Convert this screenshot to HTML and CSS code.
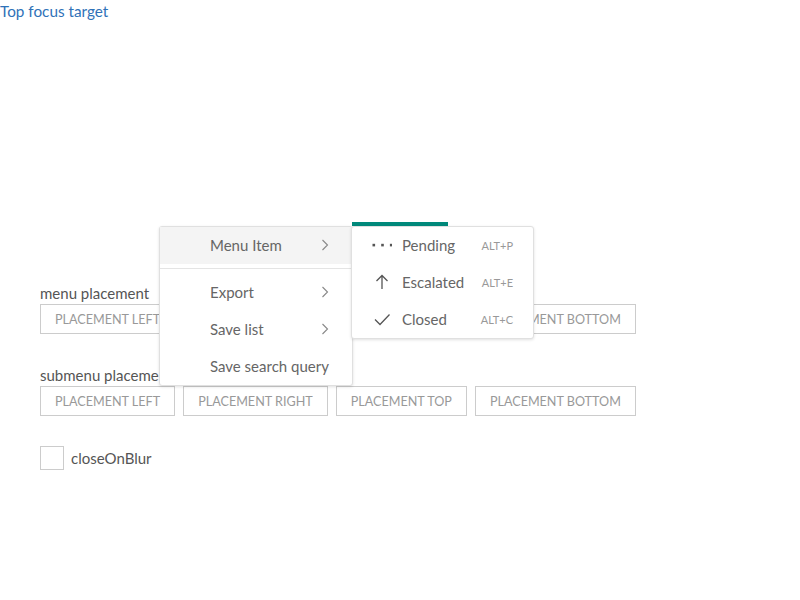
FILE: index.html
```html
<!DOCTYPE html>
<html>
<head>
<meta charset="utf-8">
<link rel="stylesheet" href="styles.css">
</head>
<body>
<a class="top-link" href="#">Top focus target</a>
<div class="stage"></div>
<div class="section">
  <div class="label">menu placement</div>
  <div class="btn-row">
    <button class="btn">Placement left</button>
    <button class="btn">Placement right</button>
    <button class="btn">Placement top</button>
    <button class="btn">Placement bottom</button>
  </div>
</div>
<div class="section">
  <div class="label">submenu placement</div>
  <div class="btn-row">
    <button class="btn">Placement left</button>
    <button class="btn">Placement right</button>
    <button class="btn">Placement top</button>
    <button class="btn">Placement bottom</button>
  </div>
</div>
<label class="check">
  <span class="box"></span>
  <span class="check-text">closeOnBlur</span>
</label>

<div class="trigger-bar"></div>

<div class="menu">
  <div class="item active">
    <span class="item-text">Menu Item</span>
    <svg class="chev" width="8" height="12" viewBox="0 0 8 12"><path d="M1.5 1 L6.5 6 L1.5 11" fill="none" stroke="#888" stroke-width="1.1"/></svg>
  </div>
  <div class="divider"></div>
  <div class="item">
    <span class="item-text">Export</span>
    <svg class="chev" width="8" height="12" viewBox="0 0 8 12"><path d="M1.5 1 L6.5 6 L1.5 11" fill="none" stroke="#888" stroke-width="1.1"/></svg>
  </div>
  <div class="item">
    <span class="item-text">Save list</span>
    <svg class="chev" width="8" height="12" viewBox="0 0 8 12"><path d="M1.5 1 L6.5 6 L1.5 11" fill="none" stroke="#888" stroke-width="1.1"/></svg>
  </div>
  <div class="item">
    <span class="item-text">Save search query</span>
  </div>
</div>

<div class="submenu">
  <div class="sub-item">
    <svg class="icon" width="20" height="20" viewBox="0 0 20 20"><rect x="0.5" y="8.8" width="2.6" height="2.6" fill="#555"/><rect x="9.2" y="8.8" width="2.6" height="2.6" fill="#555"/><rect x="17.9" y="8.8" width="2.6" height="2.6" fill="#555"/></svg>
    <span class="sub-text">Pending</span>
    <span class="shortcut">ALT+P</span>
  </div>
  <div class="sub-item">
    <svg class="icon" width="20" height="20" viewBox="0 0 20 20"><path d="M10 3.5 V17 M4.5 9 L10 3.5 L15.5 9" fill="none" stroke="#555" stroke-width="1.3"/></svg>
    <span class="sub-text">Escalated</span>
    <span class="shortcut">ALT+E</span>
  </div>
  <div class="sub-item">
    <svg class="icon" width="20" height="20" viewBox="0 0 20 20"><path d="M3 10.5 L8 15.5 L17.5 5.5" fill="none" stroke="#555" stroke-width="1.3"/></svg>
    <span class="sub-text">Closed</span>
    <span class="shortcut">ALT+C</span>
  </div>
</div>
</body>
</html>
```

FILE: styles.css
```css
html, body {
  margin: 0;
  padding: 0;
  background: #fff;
}
body {
  position: relative;
  font-family: "Lato", "Liberation Sans", sans-serif;
  font-size: 16px;
  color: #555;
  min-height: 600px;
}
.top-link {
  display: block;
  width: max-content;
  line-height: 23px;
  color: #2f72b8;
  text-decoration: none;
  font-size: 15.3px;
}
.stage {
  height: 259px;
}
.section {
  padding-left: 40px;
  margin-bottom: 30px;
}
.label {
  line-height: 22px;
  color: #555;
  font-size: 15px;
}
.btn-row {
  display: flex;
  gap: 8px;
}
.btn {
  height: 30px;
  padding: 0 14px;
  border: 1px solid #ccc;
  background: #fff;
  color: #999;
  font-family: inherit;
  font-size: 12.6px;
  text-transform: uppercase;
  border-radius: 0;
}
.check {
  display: flex;
  align-items: center;
  gap: 7px;
  padding-left: 40px;
}
.box {
  width: 22px;
  height: 22px;
  border: 1px solid #ccc;
  background: #fff;
}
.check-text {
  color: #555;
  font-size: 15px;
}
.trigger-bar {
  position: absolute;
  left: 352px;
  top: 222px;
  width: 96px;
  height: 4px;
  background: #00897b;
}
.menu {
  position: absolute;
  left: 159px;
  top: 226px;
  width: 192px;
  border: 1px solid #e0e0e0;
  border-radius: 3px;
  background: #fff;
  box-shadow: 0 1px 3px rgba(0,0,0,0.12);
}
.item {
  height: 37px;
  box-sizing: border-box;
  padding: 0 23px 1px 50px;
  display: flex;
  align-items: center;
  color: #666;
  font-size: 15px;
}
.item.active {
  background: #f4f4f4;
}
.item-text {
  flex: 1;
}
.divider {
  height: 1px;
  background: #e4e4e4;
  margin: 4px 0 5px;
}
.submenu {
  position: absolute;
  left: 351px;
  top: 226px;
  width: 181px;
  border: 1px solid #e0e0e0;
  border-radius: 3px;
  background: #fff;
  box-shadow: 0 1px 3px rgba(0,0,0,0.12);
}
.sub-item {
  height: 37px;
  box-sizing: border-box;
  padding: 0 20px 1px 20px;
  display: flex;
  align-items: center;
  color: #666;
  font-size: 15px;
}
.icon {
  flex: none;
  margin-right: 10px;
}
.sub-text {
  flex: 1;
}
.shortcut {
  font-size: 11px;
  color: #999;
}
```
